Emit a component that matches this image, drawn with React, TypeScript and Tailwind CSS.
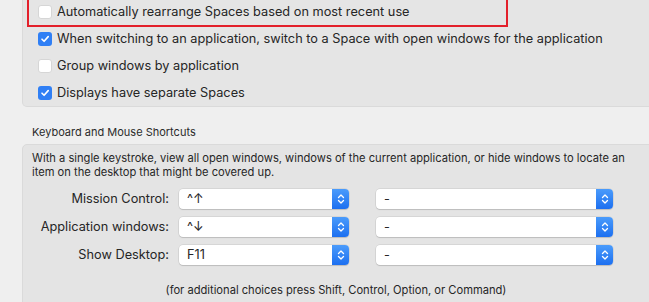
import React from "react";

const font = { fontFamily: 'Inter, "Liberation Sans", Arial, sans-serif' };

function Checkbox({ checked }: { checked: boolean }) {
  if (checked) {
    return (
      <span className="flex h-[14px] w-[14px] shrink-0 items-center justify-center rounded-[3px] bg-[#2f7ff5]">
        <svg width="10" height="10" viewBox="0 0 10 10">
          <path d="M2 5.2 L4.1 7.3 L8.2 2.6" fill="none" stroke="white" strokeWidth="1.6" strokeLinecap="round" strokeLinejoin="round" />
        </svg>
      </span>
    );
  }
  return <span className="h-[14px] w-[14px] shrink-0 rounded-[3px] border border-[#d6d6d6] bg-white" />;
}

function CheckRow({ checked, label }: { checked: boolean; label: string }) {
  return (
    <div className="flex h-[27px] items-center gap-[5px] pl-[15px] text-[12.75px] text-[#262626]">
      <Checkbox checked={checked} />
      <span>{label}</span>
    </div>
  );
}

function Stepper() {
  return (
    <span className="flex h-full w-[17px] items-center justify-center rounded-r-[4px] bg-gradient-to-b from-[#4a9bfb] to-[#1c6ff0]">
      <svg width="8" height="12" viewBox="0 0 8 12">
        <path d="M1.5 4.5 L4 2 L6.5 4.5 M1.5 7.5 L4 10 L6.5 7.5" fill="none" stroke="white" strokeWidth="1.3" strokeLinecap="round" strokeLinejoin="round" />
      </svg>
    </span>
  );
}

function Select({ value, width }: { value: string; width: string }) {
  return (
    <div className={`flex h-[20px] ${width} items-center rounded-[4px] bg-white shadow-[0_0_0_0.5px_rgba(0,0,0,0.12),0_1px_1px_rgba(0,0,0,0.12)]`}>
      <span className="flex-1 pl-[8px] text-[12.75px] text-[#262626]">{value}</span>
      <Stepper />
    </div>
  );
}

function ShortcutRow({ label, value }: { label: string; value: string }) {
  return (
    <div className="flex h-[28px] items-center">
      <span className="w-[146px] text-right text-[12.75px] text-[#262626]">{label}</span>
      <div className="ml-[10px] flex items-center gap-[27px]">
        <Select value={value} width="w-[170px]" />
        <Select value="-" width="w-[237px]" />
      </div>
    </div>
  );
}

export default function App() {
  return (
    <div className="relative h-[302px] w-[649px] overflow-hidden bg-[#efefef]" style={font}>
      <div className="relative -mt-[2px] ml-[22px] w-[700px] rounded-b-[5px] border border-t-0 border-[#dadada] bg-[#e5e5e5]">
        <CheckRow checked={false} label="Automatically rearrange Spaces based on most recent use" />
        <CheckRow checked label="When switching to an application, switch to a Space with open windows for the application" />
        <CheckRow checked={false} label="Group windows by application" />
        <CheckRow checked label="Displays have separate Spaces" />
        <div className="absolute -top-[3px] left-[4px] h-[32px] w-[481px] border-[2.5px] border-[#e3202b]" />
      </div>

      <div className="mt-[17px] pl-[32px] text-[11px] text-[#2b2b2b]">Keyboard and Mouse Shortcuts</div>

      <div className="mt-[3px] ml-[22px] h-[200px] w-[700px] rounded-[5px] border border-[#dadada] bg-[#e4e4e4] pt-[6px]">
        <p className="w-[612px] pl-[9px] text-[11.15px] leading-[14px] text-[#262626]">
          With a single keystroke, view all open windows, windows of the current application, or hide windows to locate an item on the desktop that might be covered up.
        </p>
        <div className="mt-[6px]">
          <ShortcutRow label="Mission Control:" value="^↑" />
          <ShortcutRow label="Application windows:" value="^↓" />
          <ShortcutRow label="Show Desktop:" value="F11" />
        </div>
        <div className="mt-[13px] w-[626px] text-center text-[11.15px] text-[#262626]">
          (for additional choices press Shift, Control, Option, or Command)
        </div>
      </div>
    </div>
  );
}
